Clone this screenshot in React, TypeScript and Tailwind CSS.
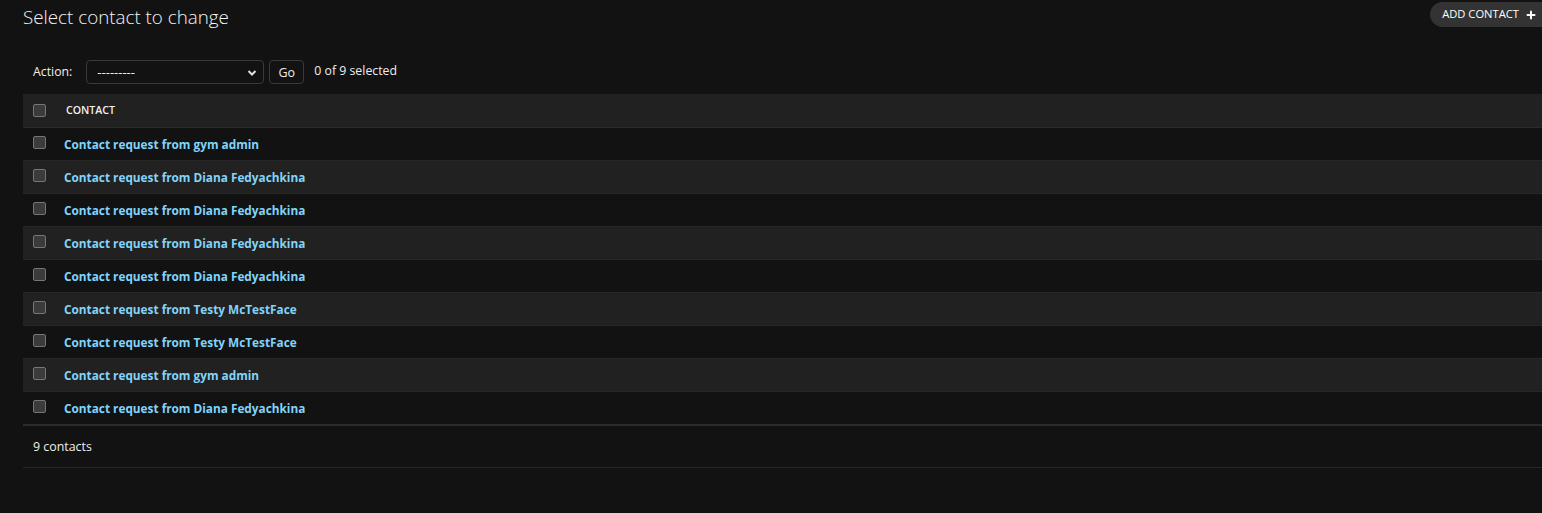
import { Plus } from 'lucide-react';

const contacts = [
  'gym admin',
  'Diana Fedyachkina',
  'Diana Fedyachkina',
  'Diana Fedyachkina',
  'Diana Fedyachkina',
  'Testy McTestFace',
  'Testy McTestFace',
  'gym admin',
  'Diana Fedyachkina',
];

function Checkbox() {
  return <span className="block w-[13px] h-[13px] rounded-[2px] border border-[#767676] bg-[#3b3b3b]" />;
}

export default function App() {
  return (
    <div
      className="w-full h-[513px] overflow-hidden bg-[#121212] text-[#eeeeee] text-[12.3px]"
      style={{ fontFamily: '"Segoe UI", "Open Sans", "Noto Sans", sans-serif' }}
    >
      <div className="w-[1560px] pl-[23px]">
        {/* Header */}
        <div className="flex items-start justify-between h-[50px]">
          <h1 className="text-[18.8px] font-light leading-[24px] mt-[5px] text-[#f5f5f5]">Select contact to change</h1>
          <a className="mt-[2px] mr-[3px] flex items-center gap-[6px] h-[25px] pl-[12px] pr-[20px] rounded-full bg-[#333333] text-[11.2px] text-white uppercase">
            Add contact
            <Plus className="w-[12px] h-[12px]" strokeWidth={4} />
          </a>
        </div>

        {/* Actions */}
        <div className="flex items-center h-[44px] pl-[10px]">
          <label className="text-[12.3px] text-[#eeeeee] mr-[14px]">Action:</label>
          <div className="relative w-[178px] h-[24px] border border-[#3a3a3a] rounded-[4px] bg-[#121212] flex items-center pl-[10px]">
            <span className="text-[13px] leading-none">---------</span>
            <svg className="absolute right-[6px] top-[8px]" width="10" height="8" viewBox="0 0 10 8">
              <path d="M1.5 2 L5 5.5 L8.5 2" stroke="#e0e0e0" strokeWidth="2" fill="none" />
            </svg>
          </div>
          <button className="ml-[5px] h-[24px] w-[35px] border border-[#3a3a3a] rounded-[4px] text-[12.5px] flex items-center justify-center pt-[2px]">
            Go
          </button>
          <span className="ml-[10px] text-[12.3px] -mt-[2px]">0 of 9 selected</span>
        </div>

        {/* Table */}
        <div>
          <div className="flex items-center h-[34px] bg-[#212121] border-b border-[#2b2b2b]">
            <div className="w-[43px] pl-[10px]">
              <Checkbox />
            </div>
            <span className="text-[10.6px] font-semibold uppercase text-[#f0f0f0] mt-[1px]">Contact</span>
          </div>
          {contacts.map((name, i) => (
            <div
              key={i}
              className={`flex items-center h-[33px] border-b border-[#272727] ${i % 2 === 1 ? 'bg-[#212121]' : 'bg-[#121212]'}`}
            >
              <div className="w-[41px] pl-[10px] -mt-[4px]">
                <Checkbox />
              </div>
              <a className="font-bold text-[#81d4fa] text-[11.8px] mt-[1px]">Contact request from {name}</a>
            </div>
          ))}
        </div>

        {/* Paginator */}
        <div className="border-t-2 border-[#2b2b2b] border-b border-b-[#272727] h-[44px] flex items-center pl-[10px] text-[12.4px] mt-[-1px]">
          <span className="mt-[1px]">9 contacts</span>
        </div>
      </div>
    </div>
  );
}
